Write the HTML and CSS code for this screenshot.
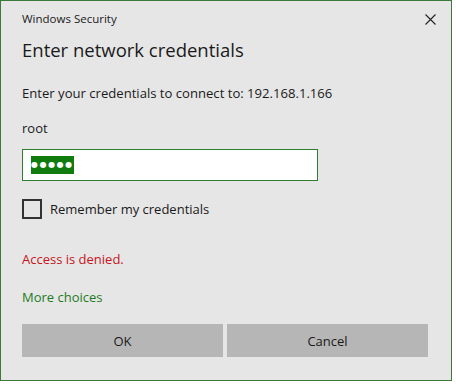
FILE: index.html
```html
<!DOCTYPE html>
<html lang="en">
<head>
<meta charset="UTF-8">
<meta name="viewport" content="width=device-width, initial-scale=1.0">
<title>Windows Security</title>
<link rel="stylesheet" href="styles.css">
</head>
<body>
<div class="dialog">
  <div class="titlebar">
    <span class="app-name">Windows Security</span>
    <svg class="close" width="11" height="11" viewBox="0 0 11 11">
      <path d="M0.5 0.5 L10.5 10.5 M10.5 0.5 L0.5 10.5" stroke="#222" stroke-width="1.1" fill="none"/>
    </svg>
  </div>
  <div class="heading">Enter network credentials</div>
  <div class="row message">Enter your credentials to connect to: 192.168.1.166</div>
  <div class="row user">root</div>
  <div class="password">
    <span class="selection">●●●●●</span>
  </div>
  <label class="remember">
    <span class="checkbox"></span>
    <span>Remember my credentials</span>
  </label>
  <div class="row error">Access is denied.</div>
  <div class="row more">More choices</div>
  <div class="buttons">
    <button class="button">OK</button>
    <button class="button">Cancel</button>
  </div>
</div>
</body>
</html>
```

FILE: styles.css
```css
/* Windows Security credential dialog */
body {
  margin: 0;
  background: #fff;
  font-family: "Open Sans", "Noto Sans", sans-serif;
  color: #1a1a1a;
}
.dialog {
  width: 406px;
  height: 379px;
  border: 1px solid #3b7a3b;
  background-color: #e6e6e6;
  padding: 0 23px 0 21px;
}
.titlebar {
  display: flex;
  justify-content: space-between;
  align-items: center;
  height: 20px;
  margin-top: 8px;
  margin-right: -8px;
}
.app-name {
  font-size: 11.5px;
  line-height: 20px;
}
.heading {
  margin-top: 7px;
  height: 28px;
  line-height: 28px;
  font-size: 18.5px;
}
.row {
  height: 21px;
  line-height: 21px;
  font-size: 13px;
}
.message {
  margin-top: 19px;
  font-size: 13.1px;
}
.user {
  margin-top: 14px;
}
.password {
  margin-top: 10px;
  width: 296px;
  height: 32px;
  box-sizing: border-box;
  border: 1px solid #2f7d2f;
  background: #fff;
  padding: 6px 0 0 8px;
}
.selection {
  display: block;
  width: 43px;
  height: 18px;
  background-color: #107c10;
  color: #fff;
  font-family: "DejaVu Sans", sans-serif;
  font-size: 8px;
  line-height: 18px;
  letter-spacing: 1.6px;
  text-align: center;
}
.remember {
  display: flex;
  align-items: center;
  gap: 8px;
  margin-top: 18px;
  height: 20px;
  font-size: 13px;
}
.checkbox {
  width: 20px;
  height: 20px;
  box-sizing: border-box;
  border: 2px solid #333;
}
.error {
  margin-top: 30px;
  color: #c5161d;
}
.more {
  margin-top: 17px;
  color: #1e7b1e;
}
.buttons {
  display: flex;
  gap: 4px;
  margin-top: 16px;
}
.button {
  flex: 1;
  height: 33px;
  border: none;
  background-color: #b6b6b6;
  font-family: inherit;
  font-size: 13px;
  color: #1a1a1a;
}
```
